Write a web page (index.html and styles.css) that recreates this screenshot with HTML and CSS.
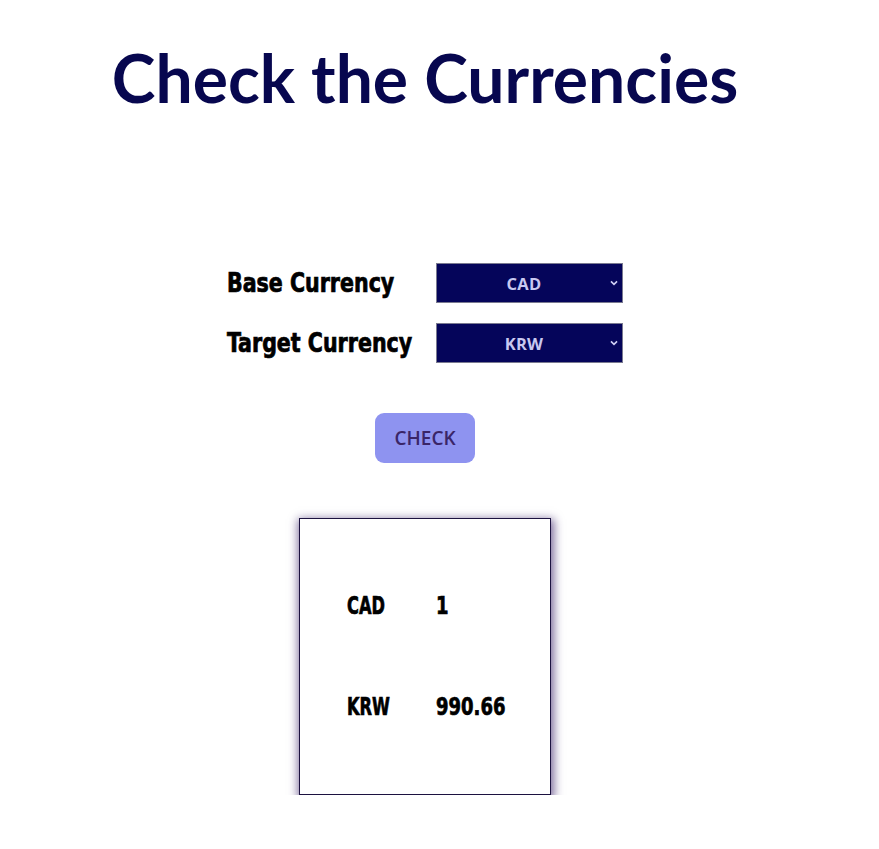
FILE: index.html
```html
<!DOCTYPE html>
<html>
<head>
<meta charset="utf-8">
<link rel="stylesheet" href="styles.css">
</head>
<body>
<div class="page">
  <h1 class="title">Check the Currencies</h1>
  <div class="form">
    <div class="row">
      <label class="label"><span class="imp">Base Currency</span></label>
      <div class="select"><span>CAD</span><svg class="chev" viewBox="0 0 10 7" width="8" height="6"><path d="M1.2 1.5l3.8 3.8 3.8-3.8" fill="none" stroke="#d0d0f4" stroke-width="2"/></svg></div>
    </div>
    <div class="row">
      <label class="label"><span class="imp">Target Currency</span></label>
      <div class="select"><span>KRW</span><svg class="chev" viewBox="0 0 10 7" width="8" height="6"><path d="M1.2 1.5l3.8 3.8 3.8-3.8" fill="none" stroke="#d0d0f4" stroke-width="2"/></svg></div>
    </div>
  </div>
  <button class="btn">CHECK</button>
  <div class="card">
    <div class="line"><span class="cur"><span class="imp2">CAD</span></span><span class="imp3">1</span></div>
    <div class="line"><span class="cur"><span class="imp2">KRW</span></span><span class="imp3">990.66</span></div>
  </div>
</div>
</body>
</html>
```
FILE: styles.css
```css
html, body { margin: 0; padding: 0; background: #fff; }
.page {
  width: 850px;
  display: flex;
  flex-direction: column;
  align-items: center;
}
.title {
  margin: 38px 0 0 0;
  font-family: Lato, "Open Sans", sans-serif;
  font-weight: 700;
  font-size: 66px;
  line-height: 80px;
  height: 80px;
  color: #07074f;
  white-space: nowrap;
}
.form {
  margin-top: 145px;
  display: flex;
  flex-direction: column;
  gap: 20px;
}
.row {
  display: flex;
  align-items: center;
  gap: 21px;
  height: 40px;
}
.label {
  width: 188px;
  white-space: nowrap;
  font-family: "DejaVu Sans", sans-serif;
  font-stretch: condensed;
  font-weight: 700;
  font-size: 26px;
  line-height: 40px;
  color: #000;
  -webkit-text-stroke: 0.7px #000;
}
.imp {
  display: inline-block;
  transform: scaleX(0.88);
  transform-origin: left center;
}
.select {
  position: relative;
  width: 187px;
  height: 40px;
  box-sizing: border-box;
  padding-right: 11px;
  background: #05055a;
  border: 1px solid #7a7a90;
  display: flex;
  align-items: center;
  justify-content: center;
  font-family: "Open Sans", "Noto Sans", sans-serif;
  font-weight: 700;
  font-size: 16.5px;
  letter-spacing: 0.3px;
  color: #c8c8f0;
}
.chev { position: absolute; right: 4px; top: 16px; }
.btn {
  margin-top: 50px;
  width: 100px;
  height: 50px;
  border: none;
  border-radius: 9px;
  background: #8e93f0;
  color: #3a2568;
  font-family: "Open Sans", "Noto Sans", sans-serif;
  font-weight: 600;
  font-size: 19px;
  padding: 0;
}
.card {
  margin-top: 55px;
  width: 252px;
  height: 277px;
  box-sizing: border-box;
  border: 1px solid #1c1240;
  box-shadow: 1px 3px 9px 2px rgba(50, 25, 100, 0.65);
  display: flex;
  flex-direction: column;
  justify-content: center;
  gap: 71px;
  padding-left: 47px;
}
.line {
  display: flex;
  font-family: "DejaVu Sans", sans-serif;
  font-stretch: condensed;
  font-weight: 700;
  font-size: 25px;
  line-height: 30px;
  color: #000;
  white-space: nowrap;
  -webkit-text-stroke: 0.7px #000;
}
.cur { width: 89px; }
.imp2 {
  display: inline-block;
  transform: scaleX(0.72);
  transform-origin: left center;
}
.imp3 {
  display: inline-block;
  transform: scaleX(0.8);
  transform-origin: left center;
}
```
